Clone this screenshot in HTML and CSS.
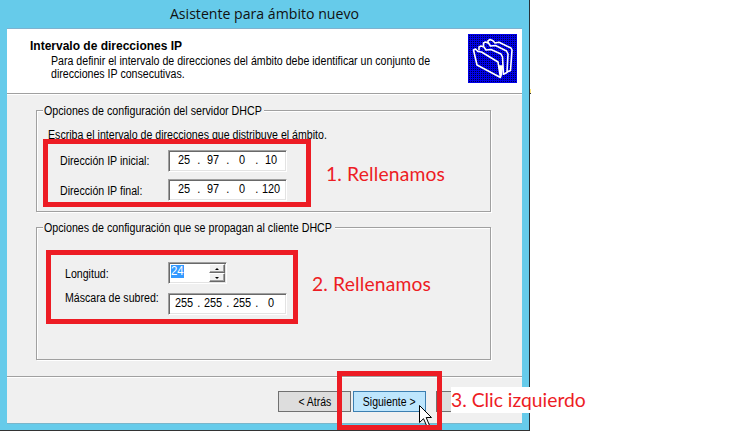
FILE: index.html
```html
<!DOCTYPE html>
<html lang="es">
<head>
<meta charset="utf-8">
<title>Asistente para ámbito nuevo</title>
<link rel="stylesheet" href="styles.css">
</head>
<body>
<div class="window">
  <div class="titlebar"><span>Asistente para ámbito nuevo</span></div>
  <div class="client">
    <header class="header">
      <div class="heading">
        <h1>Intervalo de direcciones IP</h1>
        <p><span class="t">Para definir el intervalo de direcciones del ámbito debe identificar un conjunto de</span><span class="t">direcciones IP consecutivas.</span></p>
      </div>
      <svg class="icon" width="49" height="49" viewBox="0 0 49 49">
        <path stroke="#000040" stroke-dasharray="1 1" d="M1 1.500h48M1 3.500h48M1 5.500h48M1 7.500h48M1 9.500h48M1 11.500h48M1 13.500h48M1 15.500h48M1 17.500h48M1 19.500h48M1 21.500h48M1 23.500h48M1 25.500h48M1 27.500h48M1 29.500h48M1 31.500h48M1 33.500h48M1 35.500h48M1 37.500h48M1 39.500h48M1 41.500h48M1 43.500h48M1 45.500h48M1 47.500h48"/>
        <g fill="none" stroke="#fff" stroke-width="1.6" stroke-linejoin="round">
          <path d="M20 9.5V7l2-1.5 3 1.2 2 2.300 4-.8 12 5.800 1 2-1.500 20.500-3.500 1.500"/>
          <path d="M15.500 12V9l2-1 3 1 2 3 5-.5 11 5.500 1.500 3-1 18.500-3 1.500"/>
          <path d="M11 16.500V13l2-1 3 1 2 3 5-.5 10 4.500 1.500 3 1 18"/>
          <path d="M5.500 16l2-1 2.500 2.500 3.500.5L30 28l2.500 15.500L9 31z"/>
          <path d="M31 32l2 10 1.500-10z" fill="#fff"/>
        </g>
      </svg>
    </header>
    <main class="page">
      <section class="group group-server">
        <div class="legend"><span class="t">Opciones de configuración del servidor DHCP</span></div>
        <div class="hint"><span class="t">Escriba el intervalo de direcciones que distribuye el ámbito.</span></div>
        <div class="row first"><label class="t">Dirección IP inicial:</label><div class="field ip"><b>25</b><i>.</i><b>97</b><i>.</i><b>0</b><i>.</i><b>10</b></div></div>
        <div class="row second"><label class="t low">Dirección IP final:</label><div class="field ip"><b>25</b><i>.</i><b>97</b><i>.</i><b>0</b><i>.</i><b>120</b></div></div>
      </section>
      <section class="group group-client">
        <div class="legend"><span class="t">Opciones de configuración que se propagan al cliente DHCP</span></div>
        <div class="row length"><label class="t low">Longitud:</label><div class="field spin"><span class="sel"><span class="t">24</span></span><span class="arrows"><span class="up"></span><span class="down"></span></span></div></div>
        <div class="row mask"><label class="t high">Máscara de subred:</label><div class="field ip"><b>255</b><i>.</i><b>255</b><i>.</i><b>255</b><i>.</i><b>0</b></div></div>
      </section>
    </main>
    <footer class="footer">
      <div class="btn"><span>&lt; Atrás</span></div>
      <div class="btn active"><span>Siguiente &gt;</span></div>
      <div class="btn cancel"></div>
    </footer>
  </div>
</div>
<div class="edge"></div>
<svg class="cursor" width="14" height="23" viewBox="0 0 14 23"><path d="M.5.500V17.500L4.500 13.700 8 21.500 10.500 20.400 7.200 12.500H12.500z" fill="#fff" stroke="#000"/></svg>
<div class="mark m1"></div>
<div class="mark m2"></div>
<div class="mark m3"></div>
<div class="note n1">1. Rellenamos</div>
<div class="note n2">2. Rellenamos</div>
<div class="note n3">3. Clic izquierdo</div>
</body>
</html>
```
FILE: styles.css
```css
* { box-sizing: border-box; }
body { margin: 0; width: 752px; height: 431px; overflow: hidden; background: #fff; color: #000; font: 12px/14px "Liberation Sans", Arial, sans-serif; white-space: nowrap; }
h1, p { margin: 0; }

.window { width: 530px; height: 431px; padding: 0 7px 6px; background: #66cbea; border-right: 1px solid #263238; border-bottom: 1px solid #333; }
.titlebar { height: 28px; display: flex; justify-content: center; font: 15px/26px "Open Sans", sans-serif; color: #111; }
.titlebar span { transform: scaleX(.941); }
.client { width: 515px; height: 396px; display: flex; flex-direction: column; background: #f0f0f0; border-top: 1px solid #7fb2cf; border-bottom: 1px solid #79b6cb; }

/* Narrow dialog lettering */
.t { display: block; transform: scaleX(.884); transform-origin: 0 50%; }

.header { height: 65px; display: flex; justify-content: space-between; padding: 5px 5px 0 23px; background: #fff; border-bottom: 1px solid #a0a0a0; }
.heading { padding-top: 5px; width: 400px; }
h1 { font-size: 12px; line-height: 14px; }
p { padding: 2px 0 0 21px; line-height: 13px; }
.icon { display: block; background: #0000ea; }

.page { height: 283px; border-top: 1px solid #fff; padding: 15px 31px 0 29px; border-bottom: 1px solid #a0a0a0; }
.group { width: 455px; border: 1px solid #a0a0a0; box-shadow: 1px 1px 0 #fff, inset 1px 1px 0 #fff; }
.group-server { height: 102px; }
.group-client { height: 133px; margin-top: 15px; }
.legend { width: 221px; height: 14px; margin: -7px 0 0 6px; padding-left: 1px; background: #f0f0f0; }
.legend .t { transform: scaleX(.89); }
.group-client .legend { width: 292px; }
.hint { margin: 10px 0 0 11px; }
.row { display: flex; height: 22px; margin-left: 23px; }
.first { margin-top: 8px; }
.second { margin-top: 7px; }
.length { margin: 27px 0 0 28px; }
.mask { margin: 9px 0 0 28px; }
label { width: 108px; flex: none; padding-top: 4px; }
.group-client label { width: 103px; }
label.low { padding-top: 5px; }
label.high { margin-top: -2px; padding-top: 0; }

.field { height: 22px; background: #fff; border: 1px solid; border-color: #a0a0a0 #fff #fff #a0a0a0; box-shadow: inset 1px 1px 0 #696969, inset -1px -1px 0 #e3e3e3; }
.ip { display: flex; width: 119px; padding: 2px 2px; }
.ip b, .ip i { font-weight: normal; font-style: normal; text-align: center; transform: scaleX(.91); }
.ip b { width: 26px; }
.ip i { width: 3px; }
.spin { display: flex; justify-content: space-between; width: 59px; padding: 1px; }
.sel { width: 13px; height: 13px; margin: 1px 0 0 1px; background: #39f; color: #fff; line-height: 13px; }
.sel .t { transform: scaleX(.95); }
.arrows { width: 16px; display: grid; grid-template-rows: 9px 9px; }
.up, .down { display: flex; align-items: center; justify-content: center; background: #f0f0f0; border: 1px solid; border-color: #fff #696969 #696969 #fff; box-shadow: inset -1px -1px 0 #a0a0a0; }
.up::after, .down::after { content: ""; border: 2px solid transparent; border-top-width: 0; border-bottom: 2px solid #000; }
.down::after { border-top: 2px solid #000; border-bottom-width: 0; }

.footer { height: 46px; display: flex; border-top: 1px solid #fff; padding: 13px 0 0 271px; }
.btn { width: 73px; height: 21px; flex: none; display: flex; align-items: center; justify-content: center; margin-right: 2px; background: #ddd; border: 1px solid #707070; }
.btn span { transform: scaleX(.873); }
.btn.active { background: #bee6fd; border-color: #3c7fb1; }
.btn.cancel { margin-left: 8px; }

.edge { position: absolute; left: 530px; top: 89px; width: 1px; height: 5px; background: #ffe680; border-bottom: 1px solid #333; }
.cursor { position: absolute; left: 419px; top: 405px; }
.mark { position: absolute; border: 5px solid #ed1c24; }
.m1 { left: 43px; top: 139px; width: 268px; height: 68px; }
.m2 { left: 46px; top: 250px; width: 252px; height: 74px; }
.m3 { left: 337px; top: 371px; width: 105px; height: 59px; }
.note { position: absolute; color: #ed1c24; font: 19.3px/26px Lato, sans-serif; }
.n1 { left: 326px; top: 161px; letter-spacing: .15px; }
.n2 { left: 312px; top: 271px; letter-spacing: .15px; }
.n3 { left: 451px; top: 387px; height: 26px; background: #fff; }
```
